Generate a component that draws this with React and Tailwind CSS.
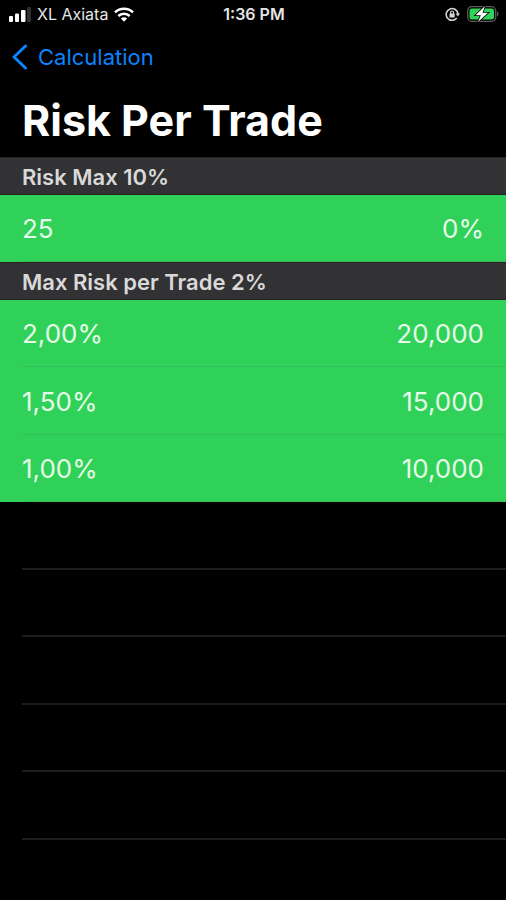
const sections = [
  { title: 'Risk Max 10%', rows: [{ label: '25', value: '0%' }] },
  {
    title: 'Max Risk per Trade 2%',
    rows: [
      { label: '2,00%', value: '20,000' },
      { label: '1,50%', value: '15,000' },
      { label: '1,00%', value: '10,000' },
    ],
  },
];

const emptyRows = [1, 2, 3, 4, 5];

function SignalIcon() {
  return (
    <svg className="h-[15px] w-[22px]" viewBox="0 0 22 15" fill="#fff" aria-hidden="true">
      <rect x="0" y="9" width="4" height="6" rx="1" />
      <rect x="6" y="6.5" width="4" height="8.5" rx="1" />
      <rect x="12" y="3" width="4.500" height="12" rx="1" />
      <rect x="18" y="0" width="4" height="15" rx="1" fill="#303030" />
    </svg>
  );
}

function WifiIcon() {
  return (
    <svg className="h-[15px] w-5" viewBox="0 0 20 15" fill="none" stroke="#fff" strokeWidth="2.6" aria-hidden="true">
      <path d="M1 5.4a13 13 0 0 1 18 0" />
      <path d="M4.3 9a8.2 8.2 0 0 1 11.4 0" />
      <path d="M10 14.8 6.9 11.6a4.5 4.5 0 0 1 6.2 0Z" fill="#fff" stroke="none" />
    </svg>
  );
}

function RotationLockIcon() {
  return (
    <svg className="h-[15px] w-[15px]" viewBox="0 0 15 15" fill="none" stroke="#d4d4d4" aria-hidden="true">
      <path d="M11.800 11A5.900 5.900 0 1 1 13 7" strokeWidth="1.600" />
      <path d="M10.6 6.6h4.4L12.8 9.4Z" fill="#d4d4d4" stroke="none" />
      <rect x="4.5" y="6.600" width="5.200" height="4" rx="0.6" fill="#d4d4d4" stroke="none" />
      <path d="M5.700 7V5.400a1.400 1.400 0 0 1 2.800 0V7" strokeWidth="1.200" />
    </svg>
  );
}

function BatteryIcon() {
  return (
    <svg className="h-[18px] w-8" viewBox="0 0 32 18" aria-hidden="true">
      <rect x="0.7" y="1.700" width="28" height="14.600" rx="4" fill="none" stroke="#5c5c5c" strokeWidth="1.3" />
      <path d="M30 6.500c2 .8 2 4.200 0 5Z" fill="#5c5c5c" />
      <rect x="2.500" y="3.500" width="24.500" height="11" rx="2.300" fill="#30d158" />
      <path d="M18 1 8.500 10.200h5.300L11 17l10-9.200h-5.500Z" fill="#fff" stroke="#000" strokeWidth="1.600" paintOrder="stroke" />
    </svg>
  );
}

function StatusBar() {
  return (
    <div className="grid h-7 grid-cols-[1fr_auto_1fr] items-center pr-[7px] pl-[9px] text-[#e5e5e5]">
      <div className="flex items-center gap-[6px]">
        <SignalIcon />
        <span className="text-[16px] leading-5">XL Axiata</span>
        <WifiIcon />
      </div>
      <span className="text-[16px] leading-5 font-semibold">1:36 PM</span>
      <div className="flex items-center justify-end gap-[7px]">
        <RotationLockIcon />
        <BatteryIcon />
      </div>
    </div>
  );
}

export default function App() {
  return (
    <div className="min-h-screen bg-black font-['Inter','Liberation_Sans',sans-serif] text-white">
      <StatusBar />
      <nav className="flex h-[58px] items-center px-3">
        <button type="button" className="flex items-center gap-[10px] text-[22px] leading-7 text-[#0a84ff]">
          <svg className="h-[26px] w-4" viewBox="0 0 16 26" fill="none" stroke="currentColor" strokeWidth="3" strokeLinecap="round" strokeLinejoin="round" aria-hidden="true">
            <path d="M13.500 2 2 13l11.500 11" />
          </svg>
          Calculation
        </button>
      </nav>
      <h1 className="h-[71px] px-[22px] pt-[6px] text-[43px] leading-[56px] font-bold">Risk Per Trade</h1>
      <main>
        {sections.map((section) => (
          <section key={section.title}>
            <h2 className="flex h-[38px] items-center border-y border-[#252326] bg-[#323133] px-[22px] pt-[2px] text-[22px] leading-7 font-semibold text-[#d9d9d9]">
              {section.title}
            </h2>
            <ul className="bg-[#30d158]">
              {section.rows.map((row) => (
                <li key={row.label} className="pl-[22px] odd:h-[67px] even:h-[68px]">
                  <div className="flex h-full items-center justify-between border-b border-[#36bb58] pt-[2px] pr-[22px] text-[26px] leading-8 text-[#e6fbe9]">
                    <span>{row.label}</span>
                    <span>{row.value}</span>
                  </div>
                </li>
              ))}
            </ul>
          </section>
        ))}
        <ul className="pl-[22px]" aria-hidden="true">
          {emptyRows.map((n) => (
            <li key={n} className="border-b-2 border-[#1c1c1c] odd:h-[68px] even:h-[67px]" />
          ))}
        </ul>
      </main>
    </div>
  );
}
